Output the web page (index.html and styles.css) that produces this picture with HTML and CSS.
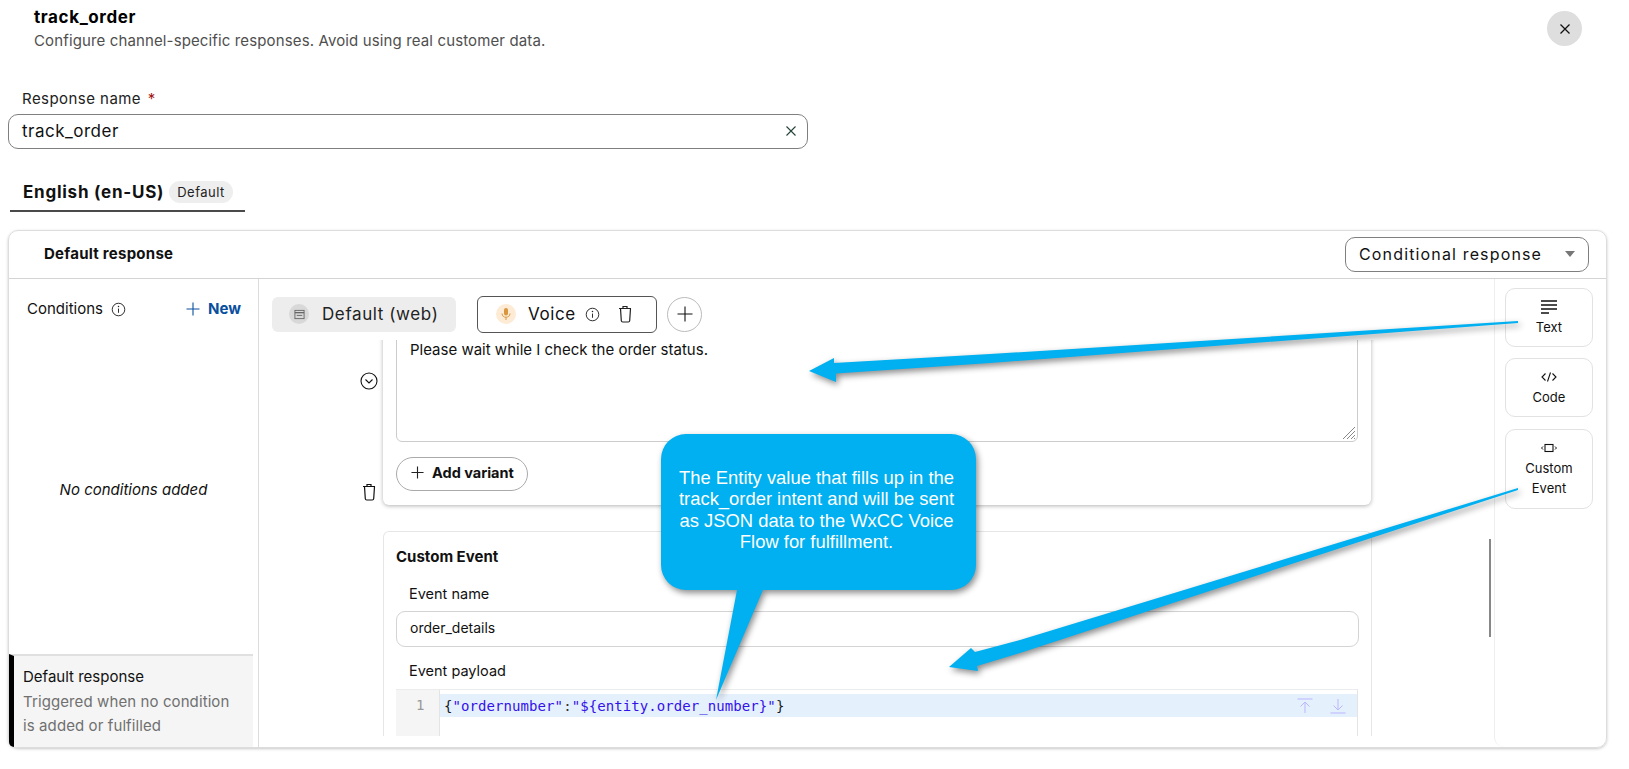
FILE: index.html
```html
<!DOCTYPE html>
<html lang="en">
<head>
    <meta charset="UTF-8">
    <meta name="viewport" content="width=device-width, initial-scale=1.0">
    <title>track_order</title>
    <link rel="stylesheet" href="styles.css">
</head>
<body>

    <div id="page">
        <header class="top">
            <div>
                <h1 class="top-title">track_order</h1>
                <p class="top-desc">Configure channel-specific responses. Avoid using real customer data.</p>
            </div>
            <button type="button" class="close-btn">
                <svg width="12" height="12" viewBox="0 0 12 12"><path d="M1.5 1.5l9 9M10.5 1.5l-9 9" stroke="#111" stroke-width="1.3" fill="none"/></svg>
            </button>
        </header>

        <div class="name-field">
            <label class="name-label">Response name <span class="req">*</span></label>
            <div class="name-input">
                <span>track_order</span>
                <svg width="12" height="12" viewBox="0 0 12 12"><path d="M1.5 1.5l9 9M10.5 1.5l-9 9" stroke="#24413a" stroke-width="1.1" fill="none"/></svg>
            </div>
        </div>

        <div class="lang-tab">
            <span class="lang-name">English (en-US)</span>
            <span class="lang-badge">Default</span>
        </div>

        <section class="panel">
            <div class="panel-head">
                <span class="panel-title">Default response</span>
                <div class="select">
                    <span>Conditional response</span>
                    <i class="caret"></i>
                </div>
            </div>

            <div class="panel-body">
                <aside class="conditions">
                    <div class="cond-head">
                        <span class="cond-title">Conditions
                            <svg class="info" width="15" height="15" viewBox="0 0 16 16"><circle cx="8" cy="8" r="6.7" fill="none" stroke="#222" stroke-width="1"/><path d="M8 7v4.5" stroke="#222" stroke-width="1"/><circle cx="8" cy="4.9" r=".8" fill="#222"/></svg>
                        </span>
                        <span class="cond-new">
                            <svg width="14" height="14" viewBox="0 0 14 14"><path d="M7 .5v13M.5 7h13" stroke="#0a4f9e" stroke-width="1.1"/></svg>
                            New
                        </span>
                    </div>
                    <div class="cond-empty">No conditions added</div>
                    <div class="cond-item">
                        <div class="cond-item-title">Default response</div>
                        <div class="cond-item-sub">Triggered when no condition is added or fulfilled</div>
                    </div>
                </aside>

                <div class="editor-area">
                    <div class="channels">
                        <div class="channel channel-off">
                            <span class="channel-dot dot-grey">
                                <svg width="11" height="11" viewBox="0 0 12 12"><rect x="1" y="1.5" width="10" height="9" fill="none" stroke="#666" stroke-width="1"/><path d="M1 4h10" stroke="#666" stroke-width="1.4"/><path d="M3 7h6" stroke="#666" stroke-width="1"/></svg>
                            </span>
                            Default (web)
                        </div>
                        <div class="channel channel-on">
                            <span class="channel-dot dot-orange">
                                <svg width="12" height="14" viewBox="0 0 12 14"><rect x="4" y="1" width="4" height="7.5" rx="2" fill="#d9963f"/><path d="M2 6.5c0 5 8 5 8 0M6 10.5V13" stroke="#d9963f" stroke-width="1" fill="none"/></svg>
                            </span>
                            Voice
                            <svg class="voice-info" width="15" height="15" viewBox="0 0 16 16"><circle cx="8" cy="8" r="6.7" fill="none" stroke="#222" stroke-width="1"/><path d="M8 7v4.5" stroke="#222" stroke-width="1"/><circle cx="8" cy="4.9" r=".8" fill="#222"/></svg>
                            <svg class="voice-trash" width="14" height="18" viewBox="0 0 14 18"><path d="M1 3.5h12M5 3.5V1.5h4v2M2.5 3.5l.8 12.2c.1.8.6 1.3 1.4 1.3h5.6c.8 0 1.3-.5 1.4-1.3l.8-12.2" fill="none" stroke="#222" stroke-width="1.2"/></svg>
                        </div>
                        <button type="button" class="channel-add">
                            <svg width="16" height="16" viewBox="0 0 16 16"><path d="M8 .5v15M.5 8h15" stroke="#111" stroke-width="1.1"/></svg>
                        </button>
                    </div>

                    <div class="scroll">
                        <div class="variant-row">
                            <div class="variant-side">
                                <svg class="side-chevron" width="18" height="18" viewBox="0 0 18 18"><circle cx="9" cy="9" r="8" fill="none" stroke="#111" stroke-width="1.1"/><path d="M5.5 7.5L9 11l3.500-3.500" fill="none" stroke="#111" stroke-width="1.1"/></svg>
                                <svg width="14" height="18" viewBox="0 0 14 18"><path d="M1 3.500h12M5 3.500V1.500h4v2M2.500 3.500l.8 12.200c.1.800.6 1.300 1.400 1.300h5.600c.8 0 1.300-.5 1.400-1.300l.8-12.200" fill="none" stroke="#111" stroke-width="1.2"/></svg>
                            </div>
                            <div class="card card-text">
                                <div class="text-box">
                                    Please wait while I check the order status.
                                    <svg class="grip" width="14" height="14" viewBox="0 0 14 14"><path d="M1 13L13 1M5 13l8-8M9 13l4-4M12 13l1-1" stroke="#888" stroke-width="1"/></svg>
                                </div>
                                <button type="button" class="add-variant">
                                    <svg width="13" height="13" viewBox="0 0 14 14"><path d="M7 .5v13M.5 7h13" stroke="#222" stroke-width="1.2"/></svg>
                                    Add variant
                                </button>
                            </div>
                        </div>

                        <div class="card card-event">
                            <div class="event-title">Custom Event</div>
                            <div class="event-label">Event name</div>
                            <div class="event-input">order_details</div>
                            <div class="event-label event-label-payload">Event payload</div>
                            <div class="code">
                                <div class="code-gutter">1</div>
                                <div class="code-body">
                                    <div class="code-line">
                                        <span><span class="brace">{</span>"ordernumber"<span class="colon">:</span>"${entity.order_number}"<span class="brace">}</span></span>
                                        <span class="code-tools">
                                            <svg width="16" height="16" viewBox="0 0 16 16"><path d="M.5 1h15M8 15V4M3.500 8.500L8 4l4.500 4.500" fill="none" stroke="#b9b5ff" stroke-width="1"/></svg>
                                            <svg width="16" height="16" viewBox="0 0 16 16"><path d="M.5 15h15M8 1v11M3.500 7.500L8 12l4.500-4.500" fill="none" stroke="#b9b5ff" stroke-width="1"/></svg>
                                        </span>
                                    </div>
                                </div>
                            </div>
                        </div>
                        <div class="scrollbar"></div>
                    </div>
                </div>

                <aside class="blocks">
                    <button type="button" class="block">
                        <svg width="16" height="16" viewBox="0 0 16 16"><path d="M0 2h16M0 6h16M0 10h16M0 14h8" stroke="#111" stroke-width="1.3"/></svg>
                        Text
                    </button>
                    <button type="button" class="block">
                        <svg width="16" height="16" viewBox="0 0 16 16"><path d="M4.500 4.500L1 8l3.500 3.500M11.500 4.500L15 8l-3.500 3.500M9.500 3.500l-3 9" fill="none" stroke="#111" stroke-width="1.1"/></svg>
                        Code
                    </button>
                    <button type="button" class="block block-wide">
                        <svg width="16" height="16" viewBox="0 0 16 16"><rect x="4" y="4.500" width="8" height="7" fill="none" stroke="#111" stroke-width="1.1"/><path d="M2 6.500L.5 8 2 9.500M14 6.500L15.500 8 14 9.500" fill="none" stroke="#111" stroke-width="1"/></svg>
                        Custom Event
                    </button>
                </aside>
            </div>
        </section>

        <!-- annotations pasted on top of the screenshot -->
        <svg class="notes" width="1629" height="769" viewBox="0 0 1629 769">
            <polygon class="note-shape" points="1518,321 990,354 834,363 834,358 809,371 836,382 836,373.500 990,363 1518,323"/>
            <polygon class="note-shape" points="1518,488 1020,640 975,652 971,648 949,667 978,671 977,666 1020,653 1518,490"/>
            <path class="note-shape" d="M686 434H951a25 25 0 0 1 25 25V565a25 25 0 0 1-25 25H763L716 700 737 590H686a25 25 0 0 1-25-25V459a25 25 0 0 1 25-25Z"/>
        </svg>
        <div class="callout-text">The Entity value that fills up in the track_order intent and will be sent as JSON data to the WxCC Voice Flow for fulfillment.</div>
    </div>

</body>
</html>
```

FILE: styles.css
```css
* {
    box-sizing: border-box;
}

html, body {
    margin: 0;
    padding: 0;
    background: #ffffff;
}

body {
    font-family: Inter, "Liberation Sans", sans-serif;
    color: #111;
}

button {
    font-family: inherit;
    background: none;
    cursor: pointer;
}

#page {
    position: relative;
    width: 1629px;
    height: 769px;
    overflow: hidden;
}

/* top */
.top {
    display: flex;
    justify-content: space-between;
    height: 56px;
    padding: 7px 47px 0 34px;
}

.top-title {
    margin: 0;
    font-size: 17px;
    line-height: 20px;
    font-weight: 700;
    letter-spacing: 0.6px;
    color: #000;
}

.top-desc {
    margin: 3px 0 0;
    font-size: 15px;
    line-height: 22px;
    letter-spacing: 0.13px;
    color: #4f4f4f;
}

.close-btn {
    display: flex;
    align-items: center;
    justify-content: center;
    width: 35px;
    height: 35px;
    margin-top: 4px;
    border: none;
    border-radius: 50%;
    background: #dedede;
}

/* response name */
.name-field {
    width: 800px;
    margin: 33px 0 0 8px;
}

.name-label {
    display: block;
    padding-left: 14px;
    margin-bottom: 5px;
    font-size: 15px;
    line-height: 20px;
    letter-spacing: 0.45px;
    color: #222;
}

.req {
    margin-left: 2px;
    color: #a51414;
}

.name-input {
    display: flex;
    align-items: center;
    justify-content: space-between;
    height: 35px;
    padding: 0 10px 2px 13px;
    border: 1px solid #7f7f7f;
    border-radius: 10px;
    font-size: 17px;
    letter-spacing: 0.5px;
}

/* language tab */
.lang-tab {
    display: flex;
    align-items: center;
    gap: 5px;
    width: 235px;
    height: 36px;
    margin: 27px 0 0 10px;
    padding: 0 0 3px 13px;
    border-bottom: 2px solid #4a4a4a;
}

.lang-name {
    font-size: 17px;
    font-weight: 700;
    letter-spacing: 0.75px;
}

.lang-badge {
    padding: 0 8px;
    border-radius: 11px;
    background: #eeeeee;
    font-size: 13px;
    line-height: 22px;
    letter-spacing: 0.5px;
    color: #222;
}

/* main panel */
.panel {
    display: flex;
    flex-direction: column;
    width: 1599px;
    height: 518px;
    margin: 18px 0 0 8px;
    border: 1px solid #dddddd;
    border-radius: 10px;
    box-shadow: 0 1px 3px rgba(0, 0, 0, 0.22);
}

.panel-head {
    display: flex;
    align-items: center;
    justify-content: space-between;
    flex: none;
    height: 48px;
    padding: 0 17px 0 35px;
    border-bottom: 1px solid #d4d4d4;
}

.panel-title {
    margin-bottom: 2px;
    font-size: 15px;
    letter-spacing: 0.25px;
    font-weight: 700;
}

.select {
    display: flex;
    align-items: center;
    justify-content: space-between;
    width: 244px;
    height: 35px;
    padding: 0 13px 2px;
    border: 1px solid #7f7f7f;
    border-radius: 10px;
    font-size: 16px;
    letter-spacing: 1.15px;
}

.caret {
    width: 0;
    height: 0;
    border-left: 5px solid transparent;
    border-right: 5px solid transparent;
    border-top: 6px solid #777;
}

.panel-body {
    display: flex;
    flex: 1;
    min-height: 0;
}

/* conditions column */
.conditions {
    display: flex;
    flex-direction: column;
    flex: none;
    width: 250px;
    padding-right: 5px;
    border-right: 1px solid #dcdcdc;
}

.cond-head {
    display: flex;
    align-items: center;
    justify-content: space-between;
    height: 45px;
    padding: 20px 12px 5px 18px;
    font-size: 15px;
    line-height: 20px;
}

.cond-title {
    display: flex;
    align-items: center;
    gap: 8px;
}

.cond-new {
    display: flex;
    align-items: center;
    gap: 8px;
    font-weight: 700;
    color: #0a4f9e;
}

.cond-empty {
    display: flex;
    flex: 1;
    align-items: center;
    justify-content: center;
    padding-left: 5px;
    font-size: 15px;
    font-style: italic;
}

.cond-item {
    height: 93px;
    padding: 11px 16px 0 9px;
    border-top: 2px solid #e0e0e0;
    border-left: 5px solid #000;
    border-bottom-left-radius: 5px;
    background: #f5f5f5;
}

.cond-item-title {
    font-size: 15px;
    line-height: 20px;
}

.cond-item-sub {
    margin-top: 3px;
    font-size: 15px;
    line-height: 24px;
    letter-spacing: 0.1px;
    color: #707070;
}

/* middle */
.editor-area {
    display: flex;
    flex-direction: column;
    flex: none;
    width: 1235px;
}

.channels {
    display: flex;
    align-items: center;
    flex: none;
    height: 61px;
    padding: 9px 0 0 13px;
}

.channel {
    display: flex;
    align-items: center;
    font-size: 17px;
    letter-spacing: 0.6px;
}

.channel-off {
    width: 184px;
    height: 35px;
    padding-left: 17px;
    border-radius: 6px;
    background: #ededed;
    color: #222;
}

.channel-on {
    width: 180px;
    height: 37px;
    margin-left: 21px;
    padding-left: 18px;
    border: 1px solid #555;
    border-radius: 6px;
}

.channel-dot {
    display: flex;
    align-items: center;
    justify-content: center;
    width: 20px;
    height: 20px;
    margin-right: 13px;
    border-radius: 50%;
}

.dot-grey {
    background: #d8d8d8;
}

.dot-orange {
    margin-right: 12px;
    background: #fdebd5;
}

.voice-info {
    margin-left: 9px;
}

.voice-trash {
    margin-left: 18px;
}

.channel-add {
    display: flex;
    align-items: center;
    justify-content: center;
    width: 35px;
    height: 35px;
    margin-left: 10px;
    padding: 0;
    border: 1px solid #bbbbbb;
    border-radius: 50%;
}

.scroll {
    position: relative;
    height: 396px;
    padding-left: 101px;
    overflow: hidden;
}

.scrollbar {
    position: absolute;
    top: 199px;
    left: 1230px;
    width: 2px;
    height: 98px;
    background: #888;
}

.variant-row {
    display: flex;
    margin-top: -20px;
}

.variant-side {
    display: flex;
    flex-direction: column;
    align-items: center;
    justify-content: space-between;
    flex: none;
    width: 18px;
    margin-right: 5px;
    padding: 52px 0 4px;
}

.card {
    width: 988px;
    background: #fff;
    border-radius: 6px;
}

.card-text {
    height: 185px;
    padding: 10px 13px 0;
    box-shadow: 0 1px 4px rgba(0, 0, 0, 0.3);
}

.text-box {
    position: relative;
    width: 962px;
    height: 112px;
    padding: 9px 13px;
    border: 1px solid #cccccc;
    border-radius: 6px;
    font-size: 15px;
    line-height: 20px;
}

.grip {
    position: absolute;
    right: 1px;
    bottom: 1px;
}

.add-variant {
    display: flex;
    align-items: center;
    gap: 8px;
    width: 132px;
    height: 34px;
    margin-top: 15px;
    padding: 0 0 3px 14px;
    border: 1px solid #aaaaaa;
    border-radius: 17px;
    font-size: 14.5px;
    font-weight: 700;
    color: #111;
}

.card-event {
    width: 989px;
    height: 240px;
    margin: 26px 0 0 23px;
    padding: 15px 12px 0;
    border: 1px solid #e6e6e6;
    border-bottom: none;
}

.event-title {
    font-size: 15px;
    line-height: 20px;
    font-weight: 700;
}

.event-label {
    margin-top: 17px;
    padding-left: 13px;
    font-size: 14.5px;
    line-height: 20px;
}

.event-label-payload {
    margin-top: 14px;
}

.event-input {
    height: 36px;
    margin-top: 7px;
    padding: 0 13px;
    border: 1px solid #d4d4d4;
    border-radius: 9px;
    font-size: 14px;
    line-height: 32px;
}

.code {
    display: flex;
    width: 962px;
    height: 60px;
    margin-top: 8px;
    border-top: 1px solid #ececec;
    border-right: 1px solid #e4e4e4;
}

.code-gutter {
    flex: none;
    width: 44px;
    padding: 4px 0 0 20px;
    background: #f5f5f5;
    border-right: 1px solid #e4e4e4;
    font-family: "DejaVu Sans Mono", monospace;
    font-size: 14px;
    line-height: 23px;
    color: #999;
}

.code-body {
    flex: 1;
    padding-top: 4px;
}

.code-line {
    display: flex;
    align-items: center;
    justify-content: space-between;
    height: 23px;
    padding: 0 11px 0 4px;
    background: #e5f0fd;
    font-family: "DejaVu Sans Mono", monospace;
    font-size: 14px;
    letter-spacing: 0.08px;
    color: #3312ea;
}

.brace {
    color: #1a1a1a;
}

.colon {
    color: #333;
}

.code-tools {
    display: flex;
    gap: 17px;
}

/* right column */
.blocks {
    display: flex;
    flex-direction: column;
    flex: none;
    gap: 11px;
    width: 112px;
    padding: 9px 0 0 10px;
    border-left: 1px solid #eeeeee;
    border-radius: 0 0 10px 10px;
}

.block {
    display: flex;
    flex-direction: column;
    align-items: center;
    gap: 2px;
    width: 88px;
    padding: 10px 8px 9px;
    border: 1px solid #e2e2e2;
    border-radius: 10px;
    background: #fff;
    font-size: 13px;
    line-height: 20px;
    color: #111;
}

.block-wide {
    margin-top: 1px;
    padding-bottom: 10px;
}

/* annotations */
.notes {
    position: absolute;
    top: 0;
    left: 0;
}

.note-shape {
    fill: #00b0f0;
    filter: drop-shadow(2px 3px 3px rgba(0, 0, 0, 0.45));
}

.callout-text {
    position: absolute;
    top: 467px;
    left: 667px;
    width: 299px;
    font-family: "Liberation Sans", Arial, sans-serif;
    font-size: 18.4px;
    line-height: 21.3px;
    text-align: center;
    color: #ffffff;
}
```
